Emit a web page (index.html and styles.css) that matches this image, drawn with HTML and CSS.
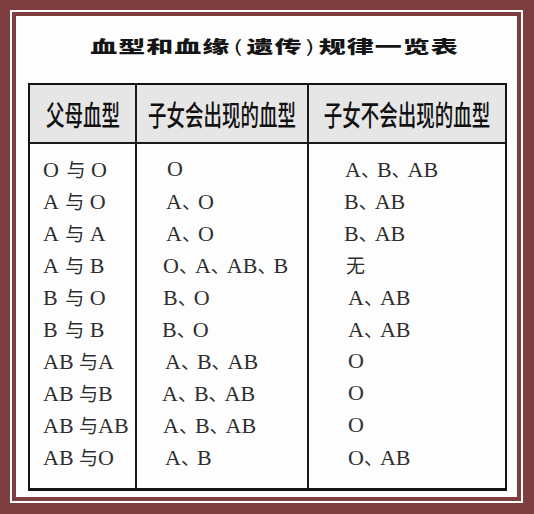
FILE: index.html
```html
<!DOCTYPE html>
<html lang="zh">
<head>
<meta charset="utf-8">
<title>血型和血缘(遗传)规律一览表</title>
<link rel="stylesheet" href="styles.css">
</head>
<body>
<div class="frame">
  <div class="panel">
    <div class="title"><span class="title-text">血型和血缘<span class="par">(</span>遗传<span class="par">)</span>规律一览表</span></div>
    <div class="grid">
      <div class="th c1"><span class="ht">父母血型</span></div>
      <div class="th c2"><span class="ht">子女会出现的血型</span></div>
      <div class="th c3"><span class="ht">子女不会出现的血型</span></div>

      <div class="td c1 first">O <span class="y">与</span> O</div>
      <div class="td c2 first p5">O</div>
      <div class="td c3 first p2">A<span class="d">、</span>B<span class="d">、</span>AB</div>

      <div class="td c1">A <span class="y">与</span> O</div>
      <div class="td c2 p4">A<span class="d">、</span>O</div>
      <div class="td c3 p1">B<span class="d">、</span>AB</div>

      <div class="td c1">A <span class="y">与</span> A</div>
      <div class="td c2 p4">A<span class="d">、</span>O</div>
      <div class="td c3 p1">B<span class="d">、</span>AB</div>

      <div class="td c1">A <span class="y">与</span> B</div>
      <div class="td c2 p1">O<span class="d">、</span>A<span class="d">、</span>AB<span class="d">、</span>B</div>
      <div class="td c3 p1"><span class="y">无</span></div>

      <div class="td c1">B <span class="y">与</span> O</div>
      <div class="td c2 p1">B<span class="d">、</span>O</div>
      <div class="td c3 p5">A<span class="d">、</span>AB</div>

      <div class="td c1">B <span class="y">与</span> B</div>
      <div class="td c2">B<span class="d">、</span>O</div>
      <div class="td c3 p5">A<span class="d">、</span>AB</div>

      <div class="td c1">AB <span class="y t">与</span>A</div>
      <div class="td c2 p3">A<span class="d">、</span>B<span class="d">、</span>AB</div>
      <div class="td c3 p5">O</div>

      <div class="td c1">AB <span class="y t">与</span>B</div>
      <div class="td c2">A<span class="d">、</span>B<span class="d">、</span>AB</div>
      <div class="td c3 p5">O</div>

      <div class="td c1">AB <span class="y t">与</span>AB</div>
      <div class="td c2 p1">A<span class="d">、</span>B<span class="d">、</span>AB</div>
      <div class="td c3 p5">O</div>

      <div class="td c1 last">AB <span class="y t">与</span>O</div>
      <div class="td c2 last p3">A<span class="d">、</span>B</div>
      <div class="td c3 last p5">O<span class="d">、</span>AB</div>
    </div>
  </div>
</div>
</body>
</html>
```

FILE: styles.css
```css
html, body {
  margin: 0;
  padding: 0;
}
body {
  background: #7e3d3f;
  width: 534px;
  height: 514px;
  overflow: hidden;
}
.frame {
  margin: 10px 11px 0 10px;
  border: 2px solid #ffffff;
  padding: 4px;
  background: #7e3d3f;
}
.panel {
  background: #fdfdfd;
  height: 481px;
  box-sizing: border-box;
  padding-left: 12px;
}
.title {
  height: 58px;
  margin-bottom: 9px;
  display: flex;
  align-items: center;
  justify-content: center;
  padding-left: 4px;
}
.title-text {
  display: inline-block;
  font-family: "Noto Sans CJK SC", sans-serif;
  font-weight: 900;
  font-size: 27px;
  line-height: 1;
  letter-spacing: 1px;
  color: #151515;
  white-space: nowrap;
  transform: scale(1, 0.62);
}
.par {
  font-weight: 400;
  margin: 0 3px;
}
.grid {
  width: 479px;
  box-sizing: border-box;
  border: 2px solid #141414;
  border-bottom-width: 3px;
  display: grid;
  grid-template-columns: 105px 172px 198px;
}
.th {
  height: 59px;
  box-sizing: border-box;
  background: #e6e6e6;
  border-bottom: 2px solid #1a1a1a;
  display: flex;
  align-items: center;
  justify-content: center;
}
.ht {
  display: inline-block;
  font-family: "Noto Sans CJK SC", sans-serif;
  font-weight: 500;
  font-size: 28px;
  line-height: 1;
  color: #111;
  white-space: nowrap;
  transform: scaleX(0.66);
  flex: none;
}
.c2, .c3 {
  border-left: 2px solid #1a1a1a;
}
.td {
  font-family: "Liberation Serif", "Noto Sans CJK SC", serif;
  font-size: 22px;
  line-height: 32px;
  height: 32px;
  color: #2e2e2e;
  white-space: nowrap;
}
.td.c1 { padding-left: 13px; }
.td.c2 { padding-left: 25px; }
.td.c3 { padding-left: 34px; }
.td.c2.p1 { padding-left: 26px; }
.td.c2.p3 { padding-left: 28px; }
.td.c2.p4 { padding-left: 29px; }
.td.c2.p5 { padding-left: 30px; }
.td.c3.p1 { padding-left: 35px; }
.td.c3.p2 { padding-left: 36px; }
.td.c3.p5 { padding-left: 39px; }
.first { padding-top: 9px; }
.last { padding-bottom: 15px; }
.y {
  font-family: "Noto Sans CJK SC", sans-serif;
  font-size: 19px;
  margin-left: 2px;
}
.y.t {
  margin-left: 0;
}
.d {
  font-family: "Noto Sans CJK SC", sans-serif;
  font-size: 19px;
  letter-spacing: -3px;
}
```
